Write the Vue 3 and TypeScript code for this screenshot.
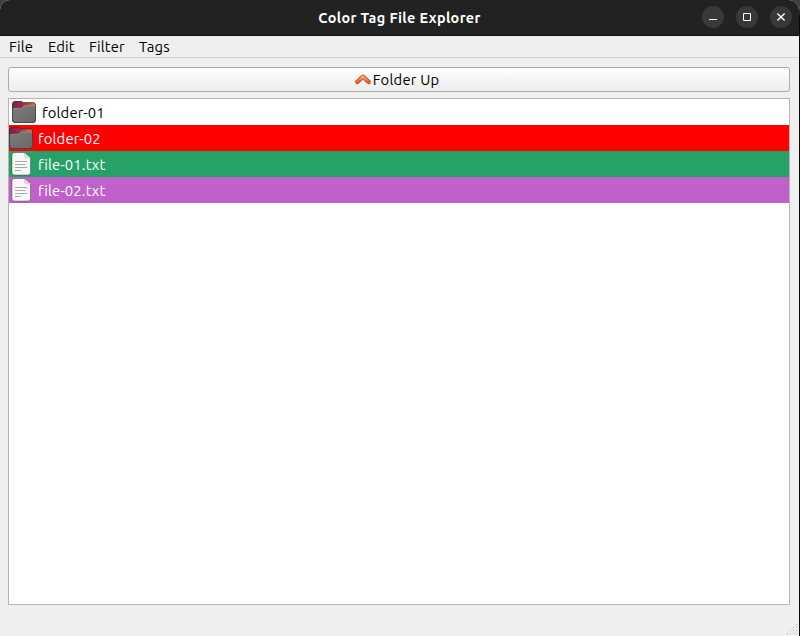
<script setup lang="ts">
interface Entry {
  name: string
  kind: 'folder' | 'file'
  tag: string
}

const menus: string[] = ['File', 'Edit', 'Filter', 'Tags']
const entries: Entry[] = [
  { name: 'folder-01', kind: 'folder', tag: 'plain' },
  { name: 'folder-02', kind: 'folder', tag: 'red' },
  { name: 'file-01.txt', kind: 'file', tag: 'green' },
  { name: 'file-02.txt', kind: 'file', tag: 'purple' },
]
</script>

<template>
  <div class="desktop">
    <div class="window">
      <header class="titlebar">
        <h1 class="title"><span>Color Tag File Explorer</span></h1>
        <div class="controls">
          <button class="control" aria-label="Minimize">
            <svg width="22" height="22" viewBox="0 0 22 22"><path d="M7 13.5h8" stroke="#fff" /></svg>
          </button>
          <button class="control" aria-label="Maximize">
            <svg width="22" height="22" viewBox="0 0 22 22"><path d="M7.5 7.5h7v7h-7z" fill="none" stroke="#fff" /></svg>
          </button>
          <button class="control" aria-label="Close">
            <svg width="22" height="22" viewBox="0 0 22 22"><path d="M7.4 7.4l7.2 7.2M14.6 7.4l-7.2 7.2" stroke="#fff" stroke-width="1.4" /></svg>
          </button>
        </div>
      </header>
      <nav class="menubar">
        <span v-for="m in menus" :key="m" class="menu" :class="'menu-' + m.toLowerCase()">{{ m }}</span>
      </nav>
      <main class="content">
        <button class="up">
          <svg width="16" height="16" viewBox="0 0 16 16">
            <defs>
              <linearGradient id="chevron" x1="0" y1="0" x2="0" y2="1">
                <stop offset="0" stop-color="#f3b080" />
                <stop offset="1" stop-color="#e5602b" />
              </linearGradient>
            </defs>
            <path d="M2.400 9.900L8 4.700l5.600 5.200" fill="none" stroke="#c95324" stroke-width="4.400" stroke-linecap="round" stroke-linejoin="round" />
            <path d="M2.400 9.900L8 4.700l5.600 5.200" fill="none" stroke="url(#chevron)" stroke-width="2.600" stroke-linecap="round" stroke-linejoin="round" />
          </svg>
          <span class="up-label">Folder Up</span>
        </button>
        <ul class="list">
          <li v-for="e in entries" :key="e.name" class="row" :class="[e.tag, e.kind]">
            <svg v-if="e.kind === 'folder'" class="icon" width="24" height="24" viewBox="0 0 24 24">
              <defs>
                <linearGradient id="tab" x1="0" x2="1">
                  <stop offset="0" stop-color="#762447" />
                  <stop offset=".45" stop-color="#a12c43" />
                  <stop offset="1" stop-color="#ee7035" />
                </linearGradient>
                <linearGradient id="body" x1="0" y1="0" x2="1" y2="1">
                  <stop offset="0" stop-color="#7c7c7c" />
                  <stop offset="1" stop-color="#686868" />
                </linearGradient>
              </defs>
              <path d="M.5 4Q.5 1.500 3 1.500h6.500l2.200 1.200H21q2.500 0 2.500 2.500v14.500q0 2.800-2.800 2.800H3.300Q.5 22.500.5 19.700z" fill="url(#tab)" stroke="#4c2935" stroke-width=".9" />
              <path d="M.8 10.200q0-2 2-2h6.700l2.300-2.400H21q2.300 0 2.300 2v11.900q0 2.700-2.700 2.700H3.500Q.8 22.400.8 19.700z" fill="url(#body)" />
              <path d="M1 9.500q.3-1.200 2-1.200h6.700l2.300-2.400h9q1.700 0 2 1.300" fill="none" stroke="#959595" stroke-width=".7" />
              <path d="M.5 8v11.700q0 2.800 2.800 2.800h17.400q2.800 0 2.800-2.800V7" fill="none" stroke="#474347" />
            </svg>
            <svg v-else class="icon" width="24" height="24" viewBox="0 0 24 24">
              <path d="M5 .5h10.500l6 5.500v14.500q0 2.500-2.500 2.500H5.500Q3 23 3 20.500V3Q3 .5 5.500.5z" fill="#f8f8f8" stroke="#000" stroke-opacity=".3" />
              <path d="M15.500 1v3q0 2 2 2h4z" fill="#dedede" />
              <path d="M15.500 1v3q0 2 2 2h4" fill="none" stroke="#bdbdbd" stroke-width=".5" />
              <path d="M6 9.500h12M6 12.500h10M6 15.500h12M6 18.500h6" stroke="#aaa" />
            </svg>
            <span class="name">{{ e.name }}</span>
          </li>
        </ul>
      </main>
      <svg class="grip" width="11" height="11" viewBox="0 0 11 11" fill="#b5b5b5">
        <path d="M9 0h1v1h-1zM6 3h1v1h-1zM9 3h1v1h-1zM3 6h1v1h-1zM6 6h1v1h-1zM9 6h1v1h-1zM0 9h1v1h-1zM3 9h1v1h-1zM6 9h1v1h-1zM9 9h1v1h-1z" />
      </svg>
    </div>
  </div>
</template>

<style>
body {
  margin: 0;
  overflow: hidden;
}
</style>

<style scoped>
* {
  box-sizing: border-box;
}
.desktop {
  width: 800px;
  height: 636px;
  padding-right: 1px;
  background: linear-gradient(#3b4143 0 8px, #080808 18px);
  font: 14.8px/20px Ubuntu, "Noto Sans", sans-serif;
  letter-spacing: 0.15px;
  color: #000;
}
.window {
  position: relative;
  display: flex;
  flex-direction: column;
  height: 100%;
  background: #efefef;
  border-radius: 10px 10px 0 0;
  overflow: hidden;
}
.titlebar {
  display: grid;
  grid-template-columns: 97px 1fr 97px;
  height: 36px;
  flex: none;
  background: #222;
  border-bottom: 1px solid #111;
}
.title {
  grid-column: 2;
  margin: 0;
  padding-top: 8px;
  font-size: 14.4px;
  line-height: 20px;
  font-weight: 700;
  text-align: center;
  color: #fff;
  letter-spacing: 0.38px;
}
.controls {
  display: flex;
  justify-content: flex-end;
  gap: 12px;
  padding: 6px 7px 0 0;
}
.control {
  width: 22px;
  height: 22px;
  flex: none;
  padding: 0;
  border: 0;
  border-radius: 50%;
  background: #383838;
}
.control svg {
  display: block;
}
.menubar {
  display: flex;
  gap: 14px;
  height: 22px;
  flex: none;
  padding-left: 9px;
  border-bottom: 1px solid #d2d2d2;
  line-height: 21px;
}
.menu {
  white-space: nowrap;
}
.menu-file {
  width: 25px;
}
.menu-edit {
  width: 27px;
}
.menu-filter {
  width: 36px;
}
.content {
  display: flex;
  flex-direction: column;
  gap: 6px;
  padding: 9px 9px 0 8px;
}
.up {
  display: flex;
  align-items: center;
  justify-content: center;
  gap: 2px;
  height: 25px;
  padding: 0 4px 0 0;
  border: 1px solid #acacac;
  border-radius: 3px;
  background: linear-gradient(#fff, #ededed);
  font: inherit;
  letter-spacing: 0.2px;
  color: #000;
}
.up-label {
  white-space: nowrap;
}
.list {
  height: 507px;
  margin: 0;
  padding: 0;
  border: 1px solid #b4b4b4;
  background: #fff;
  list-style: none;
}
.row {
  display: flex;
  align-items: center;
  gap: 5px;
  height: 26px;
  color: #fff;
}
.plain {
  padding-left: 3px;
  gap: 6px;
  color: #000;
}
.red {
  background: #f00;
}
.green {
  background: #26a269;
}
.purple {
  background: #c061cb;
}
.icon {
  flex: none;
}
.name {
  padding-top: 2px;
  white-space: nowrap;
}
.grip {
  position: absolute;
  right: 1px;
  bottom: 1px;
}
</style>
